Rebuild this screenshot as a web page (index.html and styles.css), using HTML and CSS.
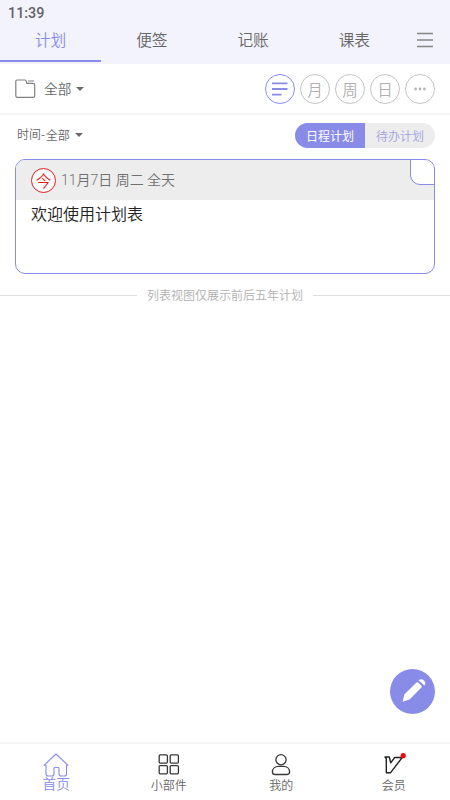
FILE: index.html
```html
<!DOCTYPE html>
<html lang="zh-CN">
<head>
<meta charset="utf-8">
<title>计划表</title>
<link rel="stylesheet" href="styles.css">
</head>
<body>
<div class="app">
  <header class="header">
    <div class="status">11:39</div>
    <nav class="tabs">
      <div class="tab active">计划</div>
      <div class="tab">便签</div>
      <div class="tab">记账</div>
      <div class="tab">课表</div>
      <div class="menu"><svg width="16" height="16" viewBox="0 0 16 16"><path d="M0 1.5h16M0 8h16M0 14.5h16" stroke="#858589" stroke-width="1.3"/></svg></div>
    </nav>
  </header>
  <section class="toolbar">
    <svg class="folder" width="21" height="20" viewBox="0 0 21 20" fill="none" stroke="#808080" stroke-width="1.2"><path d="M2 1H10Q11 1 11.3 2.3L11.8 4.4H18Q19.7 4.4 19.7 6V17Q19.7 18.4 18.2 18.4H2.2Q.8 18.4.8 17V2.3Q.8 1 2 1ZM13 2h6"/></svg>
    <span class="folder-name">全部</span>
    <i class="caret"></i>
    <div class="views">
      <div class="view selected"><svg width="16" height="14" viewBox="0 0 16 14"><path d="M0 1.3h15.5M0 7h15.5M0 12.7h9.5" stroke="#888be8" stroke-width="1.8"/></svg></div>
      <div class="view">月</div>
      <div class="view">周</div>
      <div class="view">日</div>
      <div class="view dots"><svg width="12" height="4" viewBox="0 0 12 4" fill="#b4b4b4"><circle cx="1.6" cy="2" r="1.4"/><circle cx="6" cy="2" r="1.4"/><circle cx="10.4" cy="2" r="1.4"/></svg></div>
    </div>
  </section>
  <section class="filter">
    <span class="sort"><span class="sort-key">时间-</span><span>全部</span></span>
    <i class="caret"></i>
    <div class="segment"><div class="seg on">日程计划</div><div class="seg">待办计划</div></div>
  </section>
  <article class="card">
    <div class="card-head"><span class="today">今</span><span class="date">11月7日 周二 全天</span></div>
    <div class="card-body">欢迎使用计划表</div>
    <div class="fold"></div>
  </article>
  <div class="notice">列表视图仅展示前后五年计划</div>
  <main class="space"></main>
  <footer class="nav">
    <div class="item home">
      <svg width="26" height="24" viewBox="0 0 26 24" fill="none" stroke="#888be8" stroke-width="1.1" stroke-linejoin="round"><path d="M1 12.3L13 1l12 11.3H23.5V21Q23.5 23 21.5 23H18Q16 23 16 21V15.3Q16 14.5 15 14.5H12Q11 14.5 11 15.3V21Q11 23 9 23H5Q3 23 3 21V12.3Z"/></svg>
      <span>首页</span>
    </div>
    <div class="item">
      <svg width="22" height="24" viewBox="0 0 22 24" fill="none" stroke="#383838" stroke-width="1.3"><rect x="1.2" y="1.9" width="8.2" height="8.2" rx="1"/><rect x="12.2" y="1.9" width="8.2" height="8.2" rx="1"/><rect x="1.2" y="12.6" width="8.2" height="8.2" rx="1"/><rect x="12.2" y="12.6" width="8.2" height="8.2" rx="1"/></svg>
      <span>小部件</span>
    </div>
    <div class="item">
      <svg width="20" height="24" viewBox="0 0 20 24" fill="none" stroke="#383838" stroke-width="1.3"><circle cx="10" cy="6.7" r="5.1"/><path d="M4 21.5Q1.4 21.5 1.4 19.1C1.4 15.6 4 13.4 7.5 13.4H12.5C16 13.4 18.6 15.6 18.6 19.1Q18.6 21.5 16 21.5Z"/></svg>
      <span>我的</span>
    </div>
    <div class="item">
      <svg width="24" height="24" viewBox="0 0 24 24" fill="none" stroke="#222" stroke-width="1.4" stroke-linejoin="round"><path d="M3 4H7.3L8.7 9.8 12.7 4.5H20.2L8.6 19.7H4.3V5.5Z"/><circle cx="21.2" cy="2.7" r="2.6" fill="#f00808" stroke="none"/></svg>
      <span>会员</span>
    </div>
  </footer>
  <div class="fab"><svg width="45" height="45" viewBox="0 0 45 45" fill="#fff"><path d="M12.6 32.7L14.4 25.6 26.2 13.8Q27.4 12.8 28.5 13.8L31.4 16.7Q32.1 17.8 31.4 18.6L19.5 30.5Z"/><path d="M28.6 11.3Q31.3 8.9 33.9 11.5T34.3 16.6Z"/></svg></div>
</div>
</body>
</html>
```
FILE: styles.css
```css
* { box-sizing: border-box; }
body {
  margin: 0;
  background: #fff;
  color: #666;
  font-family: "Noto Sans CJK SC", sans-serif;
  font-weight: 350;
}
svg { display: block; flex: none; }
.app {
  position: relative;
  display: flex;
  flex-direction: column;
  width: 450px;
  height: 800px;
  overflow: hidden;
}
.header { height: 64px; background: #f3f3fe; }
.status {
  height: 26px;
  padding-left: 8px;
  font-family: Roboto, sans-serif;
  font-size: 14.3px;
  font-weight: 500;
  line-height: 27px;
  color: #626266;
}
.tabs { display: flex; height: 36px; }
.tab {
  width: 101.25px;
  height: 36px;
  font-size: 15.7px;
  line-height: 28px;
  text-align: center;
}
.tab.active { color: #888be8; border-bottom: 2px solid #888be8; }
.menu { flex: 1; padding: 6px 0 0 12px; }
.toolbar {
  display: flex;
  align-items: center;
  height: 51px;
  padding: 0 15px;
  border-bottom: 2px solid #f6f6f6;
}
.folder-name { margin: -1px 0 0 8px; font-size: 13.7px; line-height: 20px; }
.caret {
  margin-left: 5px;
  border: 4px solid transparent;
  border-top: 4px solid #6a6a6a;
  border-bottom: 0;
}
.views { display: flex; gap: 5px; margin-left: auto; }
.view {
  display: flex;
  align-items: center;
  justify-content: center;
  width: 30px;
  height: 30px;
  border: 1px solid #c4c4c4;
  border-radius: 50%;
  color: #b0b0b0;
  font-size: 15.5px;
  line-height: 28px;
}
.view.selected { border-color: #888be8; }
.filter {
  display: flex;
  align-items: center;
  height: 40px;
  padding: 0 15px 0 17px;
}
.sort { display: flex; font-size: 12px; line-height: 18px; }
.sort-key { margin: -1px .6px 0 0; }
.segment {
  display: flex;
  width: 140px;
  height: 25px;
  margin-left: auto;
  overflow: hidden;
  border-radius: 13px;
}
.seg {
  flex: 1;
  background: #ededed;
  color: #a2a2e0;
  font-size: 12px;
  line-height: 25px;
  text-align: center;
}
.seg.on { background: #888be8; color: #fff; font-weight: 400; }
.card {
  position: relative;
  height: 115px;
  margin: 4px 15px 0;
  overflow: hidden;
  border: 1px solid #888be8;
  border-radius: 10px;
}
.card-head {
  display: flex;
  align-items: center;
  height: 40px;
  padding: 1px 0 0 15px;
  background: #ededed;
}
.today {
  width: 25px;
  height: 25px;
  border: 1px solid #e51b1b;
  border-radius: 50%;
  background: #fff;
  color: #e51b1b;
  font-size: 15.5px;
  line-height: 22px;
  text-align: center;
}
.date { margin: -1px 0 0 5px; font-family: Roboto, "Noto Sans CJK SC", sans-serif; font-size: 14px; line-height: 20px; color: #707070; }
.card-body {
  padding-left: 15px;
  color: #222;
  font-size: 16px;
  line-height: 27px;
}
.fold {
  position: absolute;
  top: -1px;
  right: -1px;
  width: 25px;
  height: 26px;
  border: 1px solid #888be8;
  border-radius: 0 10px 0 10px;
  background: #fff;
}
.notice {
  display: flex;
  align-items: center;
  gap: 10px;
  height: 18px;
  margin-top: 12px;
  color: #b0b0b0;
  font-size: 12px;
  line-height: 18px;
  white-space: nowrap;
}
.notice::before, .notice::after {
  content: "";
  flex: 1;
  height: 1px;
  background: #dedede;
}
.space { flex: 1; }
.nav {
  display: flex;
  height: 58px;
  border-top: 2px solid #f6f6f6;
}
.item {
  display: flex;
  flex: 1;
  flex-direction: column;
  align-items: center;
  padding-top: 9px;
  font-size: 12px;
  line-height: 18px;
}
.item span { margin-top: -1px; }
.home { color: #888be8; font-size: 13.7px; }
.home span { margin-top: -3px; }
.fab {
  position: absolute;
  top: 669px;
  left: 390px;
  width: 45px;
  height: 45px;
  border-radius: 50%;
  background: #888be8;
}
```
